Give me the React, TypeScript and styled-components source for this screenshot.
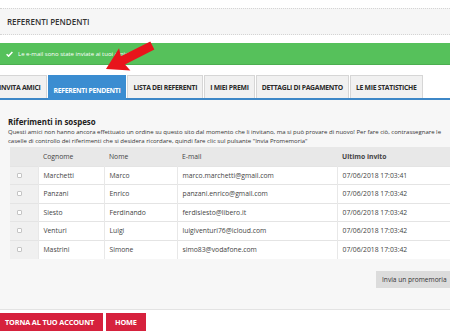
import React from "react";
import styled, { createGlobalStyle } from "styled-components";

const Global = createGlobalStyle`
  html, body { margin: 0; padding: 0; background: #fff; overflow: hidden; }
  body { font-family: "Open Sans", "Liberation Sans", sans-serif; color: #333; }
  * { box-sizing: border-box; }
`;

const Page = styled.div`
  position: relative;
  width: 470px;
  padding-top: 8px;
`;

const TitleBar = styled.div`
  height: 27px;
  background: #f6f6f6;
  border-top: 1px dotted #d4d4d4;
  border-bottom: 1px dotted #d4d4d4;
  display: flex;
  align-items: center;
  padding-left: 7px;
  font-size: 8px;
  font-weight: 600;
  color: #333;
`;

const Notice = styled.div`
  margin-top: 8px;
  height: 22px;
  background: #56c15b;
  border-bottom: 1px solid #4cae50;
  display: flex;
  align-items: center;
  gap: 5px;
  padding-left: 6px;
  font-size: 6px;
  color: #fff;
`;

const Tabs = styled.div`
  margin-top: 10px;
  margin-left: -7px;
  display: flex;
  align-items: flex-end;
  gap: 1px;
  border-bottom: 2px solid #3d87c7;
`;

const Tab = styled.div<{ $active?: boolean }>`
  height: ${(p) => (p.$active ? "25px" : "23px")};
  margin-bottom: ${(p) => (p.$active ? "-2px" : "0")};
  padding: ${(p) => (p.$active ? "5px 5px 0" : "0 5px")};
  display: flex;
  align-items: center;
  background: ${(p) => (p.$active ? "#3b8dd1" : "#f1f1f1")};
  border: 1px solid ${(p) => (p.$active ? "#3b8dd1" : "#d6d6d6")};
  border-bottom: none;
  color: ${(p) => (p.$active ? "#fff" : "#2a2a2a")};
  font-size: 6.8px;
  font-weight: 700;
  letter-spacing: -0.27px;
  white-space: nowrap;
`;

const Content = styled.div`
  background: #f7f7f7;
  border-bottom: 1px solid #e3e3e3;
  padding: 16px 10px 21px 8px;
`;

const Heading = styled.h2`
  margin: 0;
  font-size: 7.9px;
  font-weight: 700;
  color: #222;
  line-height: 12px;
`;

const Intro = styled.p`
  margin: 0;
  max-width: 438px;
  font-size: 6px;
  line-height: 9px;
  color: #333;
`;

const Table = styled.table`
  margin-top: 1px;
  margin-left: 2px;
  width: 450px;
  border-collapse: collapse;
  font-size: 6.8px;
  color: #444;
`;

const HeadCell = styled.th<{ $w?: number; $strong?: boolean }>`
  background: #e8e8e8;
  height: 19px;
  text-align: left;
  font-weight: ${(p) => (p.$strong ? 700 : 400)};
  padding: 0 5px;
  color: #444;
  width: ${(p) => (p.$w ? `${p.$w}px` : "auto")};
`;

const Row = styled.tr`
  border-top: 1px solid #e4e4e4;
`;

const Cell = styled.td<{ $check?: boolean }>`
  height: 18.5px;
  padding: 0 5px;
  background: ${(p) => (p.$check ? "#f0f0f0" : "#fff")};
  border-left: ${(p) => (p.$check ? "none" : "1px solid #e8e8e8")};
  white-space: nowrap;
`;

const Check = styled.input`
  appearance: none;
  display: block;
  margin: 0 0 0 2px;
  width: 5px;
  height: 5px;
  border: 1px solid #c4c4c4;
  background: #fff;
  border-radius: 1px;
`;

const Actions = styled.div`
  display: flex;
  justify-content: flex-end;
  margin-top: 12px;
`;

const GreyButton = styled.button`
  height: 17px;
  padding: 0 6px;
  border: none;
  background: #dcdcdc;
  font-family: inherit;
  font-size: 6.6px;
  color: #333;
  width: 84px;
  text-align: left;
  white-space: nowrap;
`;

const Footer = styled.div`
  display: flex;
  gap: 3px;
  margin-top: 3px;
  margin-left: -4px;
`;

const RedButton = styled.button`
  height: 18px;
  padding: 0 9px;
  border: none;
  background: #d6213d;
  color: #fff;
  font-family: inherit;
  font-weight: 700;
  font-size: 7.3px;
  letter-spacing: -0.15px;
  white-space: nowrap;
`;

const Arrow = styled.svg`
  position: absolute;
  left: 96px;
  top: 36px;
`;

const rows = [
  ["Marchetti", "Marco", "marco.marchetti@gmail.com", "07/06/2018 17:03:41"],
  ["Panzani", "Enrico", "panzani.enrico@gmail.com", "07/06/2018 17:03:42"],
  ["Siesto", "Ferdinando", "ferdisiesto@libero.it", "07/06/2018 17:03:42"],
  ["Venturi", "Luigi", "luigiventuri76@icloud.com", "07/06/2018 17:03:42"],
  ["Mastrini", "Simone", "simo83@vodafone.com", "07/06/2018 17:03:42"],
];

const tabs = [
  "INVITA AMICI",
  "REFERENTI PENDENTI",
  "LISTA DEI REFERENTI",
  "I MIEI PREMI",
  "DETTAGLI DI PAGAMENTO",
  "LE MIE STATISTICHE",
];

export default function App() {
  return (
    <>
      <Global />
      <Page>
        <TitleBar>REFERENTI PENDENTI</TitleBar>
        <Notice>
          <svg width="7" height="6" viewBox="0 0 7 6">
            <path d="M0.6 3.2 L2.6 5.1 L6.4 0.9" fill="none" stroke="#fff" strokeWidth="1.5" />
          </svg>
          <span>Le e-mail sono state inviate ai tuoi amici</span>
        </Notice>
        <Tabs>
          {tabs.map((t, i) => (
            <Tab key={t} $active={i === 1}>
              {t}
            </Tab>
          ))}
        </Tabs>
        <Content>
          <Heading>Riferimenti in sospeso</Heading>
          <Intro>
            Questi amici non hanno ancora effettuato un ordine su questo sito dal momento che li invitano, ma si può provare di nuovo! Per fare ciò, contrassegnare le caselle di controllo dei riferimenti che si desidera ricordare, quindi fare clic sul pulsante "Invia Promemoria"
          </Intro>
          <Table>
            <thead>
              <tr>
                <HeadCell $w={28} />
                <HeadCell $w={66}>Cognome</HeadCell>
                <HeadCell $w={73}>Nome</HeadCell>
                <HeadCell $w={160}>E-mail</HeadCell>
                <HeadCell $strong>Ultimo invito</HeadCell>
              </tr>
            </thead>
            <tbody>
              {rows.map((r) => (
                <Row key={r[2]}>
                  <Cell $check>
                    <Check type="checkbox" />
                  </Cell>
                  {r.map((c, j) => (
                    <Cell key={j}>{c}</Cell>
                  ))}
                </Row>
              ))}
            </tbody>
          </Table>
          <Actions>
            <GreyButton>Invia un promemoria</GreyButton>
          </Actions>
        </Content>
        <Footer>
          <RedButton>TORNA AL TUO ACCOUNT</RedButton>
          <RedButton>HOME</RedButton>
        </Footer>
        <Arrow width="64" height="42" viewBox="0 0 64 42">
          <polygon
            points="0,0 21,-12.5 19,-4.5 52,-4.5 52,4.5 19,4.5 21,12.5"
            fill="#e8141b"
            transform="translate(10,33) rotate(-27)"
          />
        </Arrow>
      </Page>
    </>
  );
}
